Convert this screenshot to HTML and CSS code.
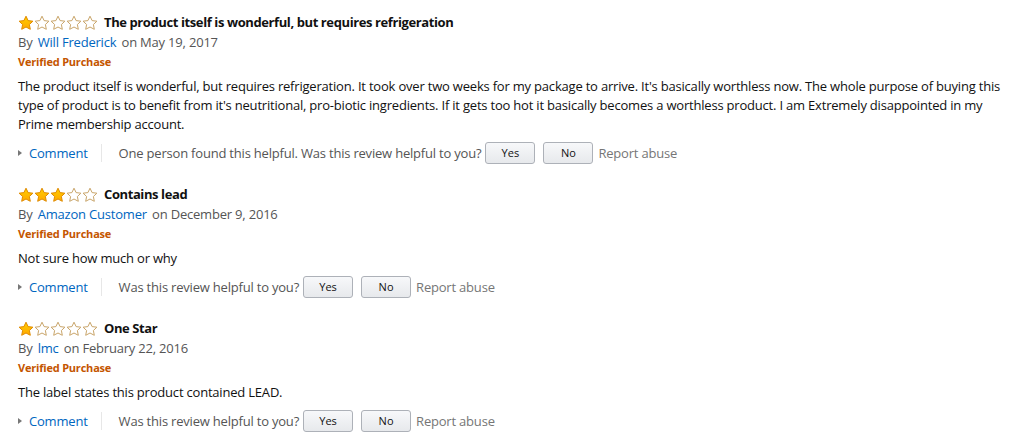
FILE: index.html
```html
<!DOCTYPE html>
<html>
<head>
<meta charset="utf-8">
<link rel="stylesheet" href="styles.css">
</head>
<body>
<svg width="0" height="0" class="defs">
  <defs>
    <linearGradient id="gold" x1="0" y1="0" x2="0" y2="1">
      <stop offset="0" stop-color="#ffce00"/>
      <stop offset="1" stop-color="#ffa700"/>
    </linearGradient>
    <symbol id="star" viewBox="0 0 16 16">
      <path d="M8 1.2 L10.1 5.6 L14.9 6.2 L11.4 9.5 L12.3 14.3 L8 12 L3.7 14.3 L4.6 9.5 L1.1 6.2 L5.9 5.6 Z" stroke-linejoin="round"/>
    </symbol>
  </defs>
</svg>
<div class="reviews">
  <div class="review">
    <div class="title-row">
      <span class="stars">
        <svg class="star full"><use href="#star"/></svg><svg class="star"><use href="#star"/></svg><svg class="star"><use href="#star"/></svg><svg class="star"><use href="#star"/></svg><svg class="star"><use href="#star"/></svg>
      </span>
      <span class="title">The product itself is wonderful, but requires refrigeration</span>
    </div>
    <div class="byline">By <a class="link author">Will Frederick</a> on May 19, 2017</div>
    <div class="verified">Verified Purchase</div>
    <div class="body">The product itself is wonderful, but requires refrigeration. It took over two weeks for my package to arrive. It's basically worthless now. The whole purpose of buying this type of product is to benefit from it's neutritional, pro-biotic ingredients. If it gets too hot it basically becomes a worthless product. I am Extremely disappointed in my Prime membership account.</div>
    <div class="actions">
      <span class="comment"><span class="caret"></span><a class="link">Comment</a></span>
      <span class="sep"></span>
      <span class="helpful">One person found this helpful. Was this review helpful to you?</span>
      <button class="btn">Yes</button>
      <button class="btn">No</button>
      <span class="report">Report abuse</span>
    </div>
  </div>
  <div class="review">
    <div class="title-row">
      <span class="stars">
        <svg class="star full"><use href="#star"/></svg><svg class="star full"><use href="#star"/></svg><svg class="star full"><use href="#star"/></svg><svg class="star"><use href="#star"/></svg><svg class="star"><use href="#star"/></svg>
      </span>
      <span class="title">Contains lead</span>
    </div>
    <div class="byline">By <a class="link author">Amazon Customer</a> on December 9, 2016</div>
    <div class="verified">Verified Purchase</div>
    <div class="body">Not sure how much or why</div>
    <div class="actions">
      <span class="comment"><span class="caret"></span><a class="link">Comment</a></span>
      <span class="sep"></span>
      <span class="helpful">Was this review helpful to you?</span>
      <button class="btn">Yes</button>
      <button class="btn">No</button>
      <span class="report">Report abuse</span>
    </div>
  </div>
  <div class="review">
    <div class="title-row">
      <span class="stars">
        <svg class="star full"><use href="#star"/></svg><svg class="star"><use href="#star"/></svg><svg class="star"><use href="#star"/></svg><svg class="star"><use href="#star"/></svg><svg class="star"><use href="#star"/></svg>
      </span>
      <span class="title">One Star</span>
    </div>
    <div class="byline">By <a class="link author">lmc</a> on February 22, 2016</div>
    <div class="verified">Verified Purchase</div>
    <div class="body">The label states this product contained LEAD.</div>
    <div class="actions">
      <span class="comment"><span class="caret"></span><a class="link">Comment</a></span>
      <span class="sep"></span>
      <span class="helpful">Was this review helpful to you?</span>
      <button class="btn">Yes</button>
      <button class="btn">No</button>
      <span class="report">Report abuse</span>
    </div>
  </div>
</div>
</body>
</html>
```
FILE: styles.css
```css
html, body {
  margin: 0;
  padding: 0;
  background: #fff;
}
body {
  font-family: "Open Sans", "Liberation Sans", sans-serif;
  font-size: 13px;
  line-height: 19px;
  letter-spacing: -0.2px;
  color: #111;
}
.defs {
  position: absolute;
  width: 0;
  height: 0;
}
.reviews {
  padding: 12px 16px 0 18px;
  display: flex;
  flex-direction: column;
  gap: 20px;
}
.review {
  display: flex;
  flex-direction: column;
}
.title-row {
  display: flex;
  align-items: center;
  height: 21px;
}
.stars {
  display: flex;
  width: 80px;
  margin-right: 6px;
}
.star {
  width: 16px;
  height: 16px;
  fill: #fff;
  stroke: #c9a56a;
  stroke-width: 1;
}
.star.full {
  fill: url(#gold);
  stroke: #e08b00;
}
.title {
  font-weight: 700;
  letter-spacing: -0.4px;
  color: #111;
}
.byline {
  color: #555;
}
.link {
  color: #0066c0;
  text-decoration: none;
}
.author {
  margin: 0 2px;
}
.verified {
  color: #c45500;
  font-size: 11px;
  font-weight: 700;
  letter-spacing: -0.2px;
  line-height: 19px;
}
.body {
  margin-top: 6px;
  color: #111;
}
.actions {
  display: flex;
  align-items: center;
  margin-top: 8px;
  height: 22px;
}
.comment {
  display: flex;
  align-items: center;
}
.caret {
  width: 0;
  height: 0;
  border-left: 4px solid #777;
  border-top: 3.5px solid transparent;
  border-bottom: 3.5px solid transparent;
  margin-right: 7px;
}
.sep {
  width: 1px;
  height: 18px;
  background: #e7e7e7;
  margin: 0 17px 0 13px;
}
.helpful {
  color: #555;
}
.btn {
  font-family: "Open Sans", "Liberation Sans", sans-serif;
  font-size: 11px;
  color: #111;
  width: 50px;
  height: 22px;
  margin-left: 4px;
  margin-right: 4px;
  border: 1px solid #adb1b8;
  border-radius: 3px;
  background: linear-gradient(#f7f8fa, #e7e9ec);
  padding: 0;
  line-height: 20px;
}
.report {
  color: #767676;
  margin-left: 1px;
}
```
